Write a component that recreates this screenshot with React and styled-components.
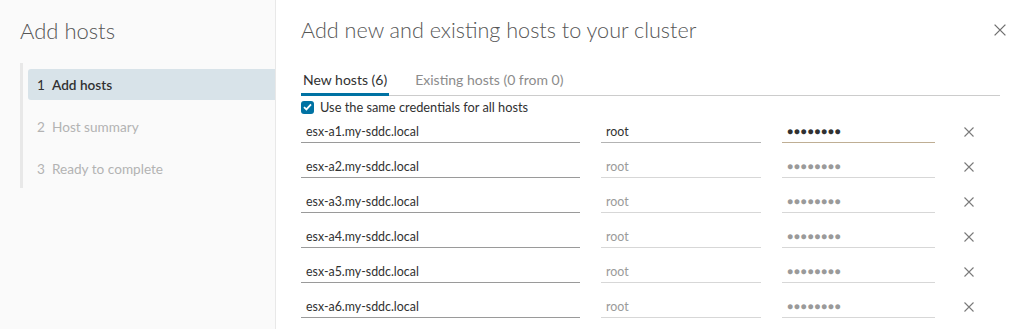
import styled, { createGlobalStyle } from "styled-components";

const hosts = [
  "esx-a1.my-sddc.local",
  "esx-a2.my-sddc.local",
  "esx-a3.my-sddc.local",
  "esx-a4.my-sddc.local",
  "esx-a5.my-sddc.local",
  "esx-a6.my-sddc.local",
];

const steps = ["Add hosts", "Host summary", "Ready to complete"];

function CloseIcon({ size = 10 }) {
  return (
    <svg width={size} height={size} viewBox="0 0 10 10">
      <path d="M0.5 0.5 L9.5 9.5 M9.5 0.5 L0.5 9.5" stroke="currentColor" strokeWidth="1.1" fill="none" />
    </svg>
  );
}

export default function App() {
  return (
    <>
      <GlobalStyle />
      <Page>
        <Sidebar>
          <SideTitle>Add hosts</SideTitle>
          <StepList>
            {steps.map((s, i) => (
              <Step key={s} active={i === 0}>
                <StepNum>{i + 1}</StepNum>
                {s}
              </Step>
            ))}
          </StepList>
        </Sidebar>
        <Main>
          <Header>
            <Title>Add new and existing hosts to your cluster</Title>
            <CloseButton>
              <CloseIcon size={12} />
            </CloseButton>
          </Header>
          <TabBar>
            <Tab active>New hosts (6)</Tab>
            <Tab>Existing hosts (0 from 0)</Tab>
          </TabBar>
          <CheckRow>
            <CheckBox>
              <svg width="9" height="8" viewBox="0 0 9 8">
                <path d="M1 4.2 L3.4 6.4 L8 1.4" stroke="#fff" strokeWidth="1.8" fill="none" />
              </svg>
            </CheckBox>
            Use the same credentials for all hosts
          </CheckRow>
          <Rows>
            {hosts.map((h, i) => (
              <HostRow key={h}>
                <Field>{h}</Field>
                <Field muted={i > 0} light>
                  root
                </Field>
                <Field muted={i > 0} light focused={i === 0} dots>
                  ●●●●●●●●
                </Field>
                <RemoveButton>
                  <CloseIcon />
                </RemoveButton>
              </HostRow>
            ))}
          </Rows>
        </Main>
      </Page>
    </>
  );
}

const GlobalStyle = createGlobalStyle`
  body {
    margin: 0;
    background: #fff;
    font-family: Lato, "Noto Sans", sans-serif;
    color: #313131;
  }
`;

const Page = styled.div`
  display: flex;
  height: 329px;
  overflow: hidden;
`;

const Sidebar = styled.div`
  width: 276px;
  flex-shrink: 0;
  background: #fafafa;
  border-right: 1px solid #e8e8e8;
  padding-top: 18px;
  box-sizing: border-box;
`;

const SideTitle = styled.h2`
  margin: 0 0 19px 20px;
  font-size: 22px;
  font-weight: 300;
  line-height: 26px;
  color: #565656;
`;

const StepList = styled.div`
  margin-left: 20px;
  border-left: 3px solid #e8e8e8;
  padding: 6px 0 4px 5px;
  display: flex;
  flex-direction: column;
  gap: 11px;
`;

const Step = styled.div`
  height: 31px;
  display: flex;
  align-items: center;
  padding-left: 9px;
  font-size: 13.6px;
  border-radius: 3px 0 0 3px;
  background: ${(p) => (p.active ? "#d8e3e9" : "transparent")};
  color: ${(p) => (p.active ? "#313131" : "#b3b3b3")};
  font-weight: ${(p) => (p.active ? 600 : 400)};
`;

const StepNum = styled.span`
  width: 15px;
  font-weight: 400;
`;

const Main = styled.div`
  flex: 1;
  padding: 17px 24px 0 25px;
`;

const Header = styled.div`
  display: flex;
  align-items: center;
  justify-content: space-between;
`;

const Title = styled.h1`
  margin: 0;
  font-size: 21.6px;
  font-weight: 300;
  line-height: 26px;
  color: #565656;
`;

const CloseButton = styled.span`
  display: flex;
  color: #6f6f6f;
  margin-right: -6px;
`;

const TabBar = styled.div`
  display: flex;
  gap: 24px;
  margin-top: 23px;
  border-bottom: 1px solid #cccccc;
`;

const Tab = styled.div`
  font-size: 14px;
  line-height: 18px;
  padding: 5px 2px 4px;
  margin-bottom: -1px;
  border-bottom: 3px solid ${(p) => (p.active ? "#0072a3" : "transparent")};
  color: ${(p) => (p.active ? "#313131" : "#8c8c8c")};
`;

const CheckRow = styled.label`
  display: flex;
  align-items: center;
  gap: 6px;
  height: 16px;
  margin-top: 3px;
  font-size: 12.8px;
  color: #313131;
`;

const CheckBox = styled.span`
  width: 13px;
  height: 13px;
  border-radius: 3px;
  background: #0072a3;
  display: flex;
  align-items: center;
  justify-content: center;
`;

const Rows = styled.div`
  display: flex;
  flex-direction: column;
  gap: 11px;
  margin-top: 4px;
`;

const HostRow = styled.div`
  display: grid;
  grid-template-columns: 279px 160px 153px 26px;
  column-gap: 21px;
  align-items: end;
`;

const Field = styled.div`
  height: 24px;
  padding-top: 2px;
  line-height: 21px;
  box-sizing: border-box;
  padding-left: 5px;
  font-size: ${(p) => (p.dots ? "10px" : "12.4px")};
  letter-spacing: ${(p) => (p.dots ? "0.8px" : "0")};
  color: ${(p) => (p.muted ? "#9a9a9a" : "#313131")};
  border-bottom: 1px solid
    ${(p) =>
      p.focused ? "#bfae94" : p.light ? (p.muted ? "#d7d7d7" : "#b3b3b3") : "#9a9a9a"};
`;

const RemoveButton = styled.span`
  display: flex;
  justify-content: center;
  padding-bottom: 6px;
  color: #7a7a7a;
`;
